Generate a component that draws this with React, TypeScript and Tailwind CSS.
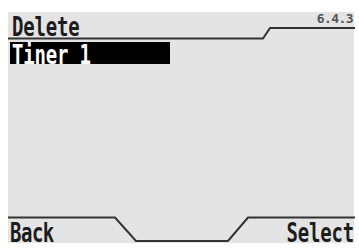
const lcd = { fontFamily: '"DejaVu Sans Mono", "Liberation Mono", monospace' };

export default function App() {
  return (
    <div className="relative w-[359px] h-[248px] bg-white overflow-hidden">
      <div
        className="ml-[8px] mt-[12px] w-[346px] h-[231px] bg-[#e4e4e4] flex flex-col text-[#1c1c1c]"
        style={lcd}
      >
        {/* header */}
        <div className="flex items-start justify-between h-[29px]">
          <span className="ml-[4px] mt-[4px] text-[19px] font-bold leading-[14px] tracking-[-0.2px] scale-y-[1.4] origin-top-left">
            Delete
          </span>
          <span className="mr-[1px] mt-[0px] text-[13px] font-bold leading-[13px] tracking-[-0.6px] text-[#555]">
            6.4.3
          </span>
        </div>

        {/* menu */}
        <div className="ml-[2px] mt-[1px] w-[160px] h-[22px] bg-black text-white">
          <span className="block ml-[2px] mt-[2px] text-[19px] font-bold leading-[14px] tracking-[-0.2px] scale-y-[1.4] origin-top-left">
            Tiner 1
          </span>
        </div>

        <div className="flex-1" />

        {/* soft keys */}
        <div className="flex items-end justify-between h-[24px]">
          <span className="ml-[2px] mb-[1px] text-[19px] font-bold leading-[14px] tracking-[-0.5px] scale-y-[1.4] origin-bottom-left">
            Back
          </span>
          <span className="mr-[0px] mb-[1px] text-[19px] font-bold leading-[14px] tracking-[-0.2px] scale-y-[1.4] origin-bottom-right">
            Select
          </span>
        </div>
      </div>

      {/* frame lines */}
      <svg
        className="absolute top-0 left-0 pointer-events-none"
        width="359"
        height="248"
        viewBox="0 0 359 248"
      >
        <polyline
          points="8,38.5 263,38.5 270,28 355,28"
          fill="none"
          stroke="#333"
          strokeWidth="2"
        />
        <polyline
          points="8,217.5 115,217.5 136,241 228,241 248,217.5 355,217.5"
          fill="none"
          stroke="#333"
          strokeWidth="2"
        />
      </svg>
    </div>
  );
}
